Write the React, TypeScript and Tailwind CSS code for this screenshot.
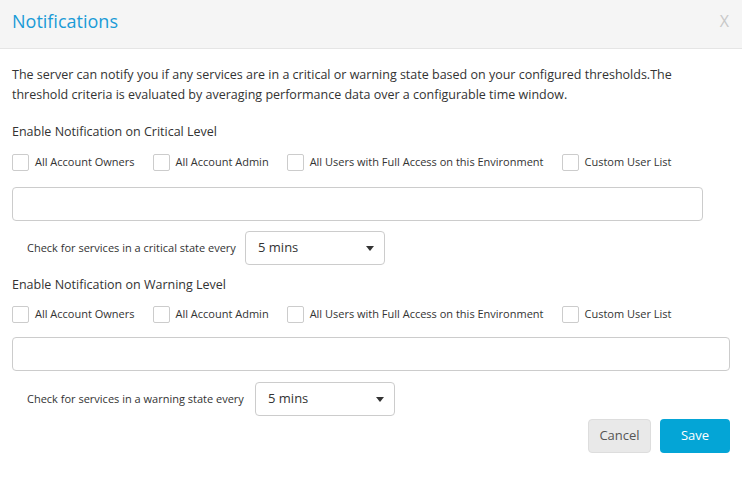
import React, { useState } from "react";

const font = { fontFamily: '"Open Sans", "Noto Sans", sans-serif' };

const Check = ({ label }: { label: string }) => {
  const [on, setOn] = useState(false);
  return (
    <label className="flex items-center cursor-pointer mr-[18px]">
      <span
        onClick={() => setOn(!on)}
        className="w-[17px] h-[17px] border border-[#cccccc] rounded-[2px] bg-white flex items-center justify-center text-[11px] text-[#333]"
      >
        {on ? "✓" : ""}
      </span>
      <span className="ml-[6px] text-[11px] text-[#333] whitespace-nowrap">{label}</span>
    </label>
  );
};

const CheckRow = () => (
  <div className="flex items-center h-[20px]">
    <Check label="All Account Owners" />
    <Check label="All Account Admin" />
    <Check label="All Users with Full Access on this Environment" />
    <Check label="Custom User List" />
  </div>
);

const Interval = ({ text, width, top }: { text: string; width: string; top: string }) => (
  <div className={"flex items-center pl-[15px] " + top}>
    <span className={"shrink-0 whitespace-nowrap text-[11px] text-[#333] " + width}>{text}</span>
    <div className="w-[140px] h-[34px] border border-[#cccccc] rounded-[4px] flex items-center justify-between pl-[12px] pr-[10px] text-[13px] text-[#333]">
      <span>5 mins</span>
      <span className="w-0 h-0 border-l-[4px] border-r-[4px] border-t-[5px] border-l-transparent border-r-transparent border-t-[#333]" />
    </div>
  </div>
);

export default function App() {
  return (
    <div className="w-[742px] h-[486px] bg-white" style={font}>
      <div className="h-[49px] bg-[#f5f5f5] border-b border-[#e5e5e5] flex items-center justify-between px-3">
        <h1 className="text-[18px] text-[#1a9bd7] font-normal -mt-[6px]">Notifications</h1>
        <span className="text-[16px] text-[#c8c8c8] -mt-[6px] mr-[1px]">X</span>
      </div>
      <div className="px-3 pt-[16px]">
        <p className="text-[12.5px] leading-[20px] text-[#333] pr-[50px]">
          The server can notify you if any services are in a critical or warning state based on your configured thresholds.The threshold criteria is evaluated by averaging performance data over a configurable time window.
        </p>
        <p className="text-[12.5px] leading-[20px] text-[#333] mt-[17px]">Enable Notification on Critical Level</p>
        <div className="mt-[10px]">
          <CheckRow />
        </div>
        <input className="block w-[691px] h-[34px] border border-[#cccccc] rounded-[4px] mt-[15px] outline-none px-3 text-[13px]" />
        <Interval text="Check for services in a critical state every" width="w-[218px]" top="mt-[10px]" />
        <p className="text-[12.5px] leading-[20px] text-[#333] mt-[10px]">Enable Notification on Warning Level</p>
        <div className="mt-[9px]">
          <CheckRow />
        </div>
        <input className="block w-full h-[34px] border border-[#cccccc] rounded-[4px] mt-[13px] outline-none px-3 text-[13px]" />
        <Interval text="Check for services in a warning state every" width="w-[228px]" top="mt-[11px]" />
        <div className="flex justify-end gap-[9px] mt-[3px]">
          <button className="w-[63px] h-[34px] bg-[#e9e9e9] border border-[#dddddd] rounded-[4px] text-[13px] text-[#555]">Cancel</button>
          <button className="w-[70px] h-[34px] bg-[#04a5d6] rounded-[4px] text-[13px] text-white">Save</button>
        </div>
      </div>
    </div>
  );
}
